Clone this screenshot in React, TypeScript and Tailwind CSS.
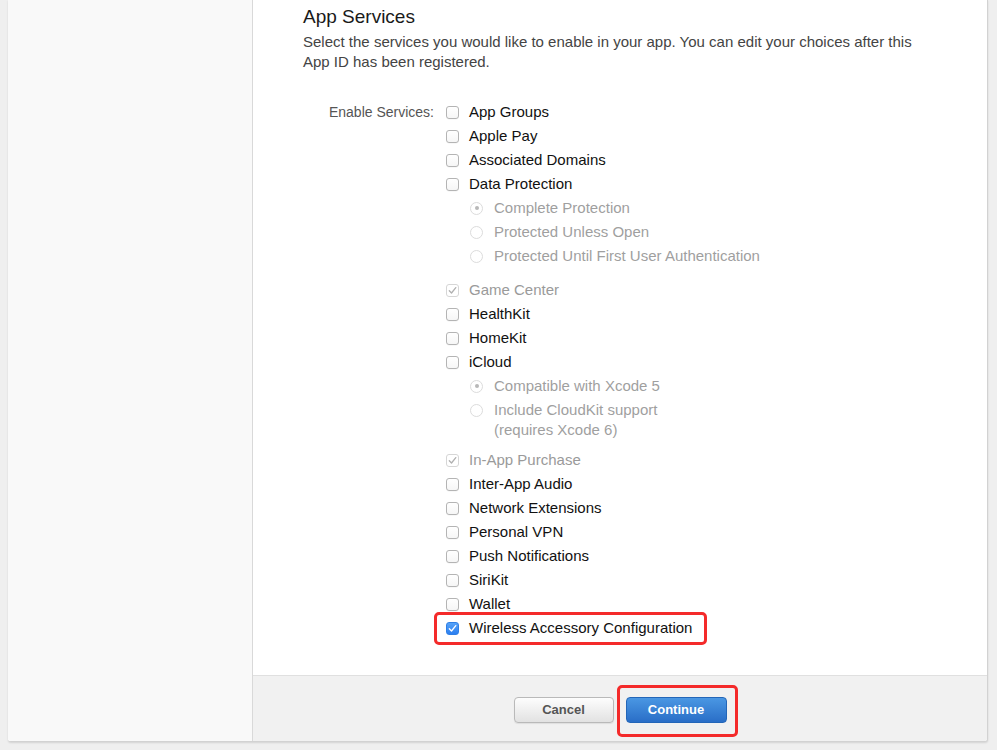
import React from "react";

type Item =
  | { kind: "cb"; label: string; state?: "off" | "disabledChecked" | "checked"; gapBefore?: boolean; highlight?: boolean }
  | { kind: "radio"; label: string; dot?: boolean; extra?: string };

const items: Item[] = [
  { kind: "cb", label: "App Groups" },
  { kind: "cb", label: "Apple Pay" },
  { kind: "cb", label: "Associated Domains" },
  { kind: "cb", label: "Data Protection" },
  { kind: "radio", label: "Complete Protection", dot: true },
  { kind: "radio", label: "Protected Unless Open" },
  { kind: "radio", label: "Protected Until First User Authentication" },
  { kind: "cb", label: "Game Center", state: "disabledChecked", gapBefore: true },
  { kind: "cb", label: "HealthKit" },
  { kind: "cb", label: "HomeKit" },
  { kind: "cb", label: "iCloud" },
  { kind: "radio", label: "Compatible with Xcode 5", dot: true },
  { kind: "radio", label: "Include CloudKit support", extra: "(requires Xcode 6)" },
  { kind: "cb", label: "In-App Purchase", state: "disabledChecked", gapBefore: true },
  { kind: "cb", label: "Inter-App Audio" },
  { kind: "cb", label: "Network Extensions" },
  { kind: "cb", label: "Personal VPN" },
  { kind: "cb", label: "Push Notifications" },
  { kind: "cb", label: "SiriKit" },
  { kind: "cb", label: "Wallet" },
  { kind: "cb", label: "Wireless Accessory Configuration", state: "checked", highlight: true },
];

function Check({ color }: { color: string }) {
  return (
    <svg width="9" height="9" viewBox="0 0 9 9" fill="none">
      <path d="M1.3 4.8 L3.5 7 L7.8 1.6" stroke={color} strokeWidth="1.3" strokeLinecap="round" strokeLinejoin="round" />
    </svg>
  );
}

function Checkbox({ state = "off" }: { state?: "off" | "disabledChecked" | "checked" }) {
  if (state === "checked") {
    return (
      <span className="flex h-[13px] w-[13px] items-center justify-center rounded-[3px] border border-[#2f7fe6] bg-gradient-to-b from-[#56a2f7] to-[#2b7ff0]">
        <Check color="#ffffff" />
      </span>
    );
  }
  if (state === "disabledChecked") {
    return (
      <span className="flex h-[13px] w-[13px] items-center justify-center rounded-[3px] border border-[#d6d6d6] bg-white">
        <Check color="#b0b0b0" />
      </span>
    );
  }
  return <span className="block h-[13px] w-[13px] rounded-[3px] border border-[#b4b4b4] bg-gradient-to-b from-white to-[#f6f6f6] shadow-[0_0.5px_0.5px_rgba(0,0,0,0.06)]" />;
}

function Radio({ dot }: { dot?: boolean }) {
  return (
    <span className="flex h-[13px] w-[13px] items-center justify-center rounded-full border border-[#dcdcdc] bg-white">
      {dot && <span className="block h-[4px] w-[4px] rounded-full bg-[#b8b8b8]" />}
    </span>
  );
}

export default function App() {
  return (
    <div
      className="flex h-[750px] w-[997px] bg-[#efefef]"
      style={{ fontFamily: '"Liberation Sans", Arial, sans-serif' }}
    >
      <div className="ml-[8px] flex h-[742px] w-[980px] overflow-hidden rounded-b-[3px] border-r border-b border-[#d2d2d2] bg-white shadow-[0_1px_2px_rgba(0,0,0,0.12)]">
        <div className="w-[245px] shrink-0 border-r border-[#d9d9d9] bg-[#f9f9f9]" />
        <div className="flex flex-1 flex-col">
          <div className="flex-1 pl-[50px] pt-[5px]">
            <h1 className="text-[19px] leading-[24px] text-[#1a1a1a]">App Services</h1>
            <p className="mt-[3px] w-[625px] text-[15px] leading-[20px] text-[#444]">
              Select the services you would like to enable in your app. You can edit your choices after this App ID has been registered.
            </p>
            <div className="mt-[28px] flex">
              <div className="w-[131px] text-right text-[14px] leading-[24px] text-[#555]">Enable Services:</div>
              <div className="ml-[12px] flex flex-col">
                {items.map((it, i) =>
                  it.kind === "cb" ? (
                    <div key={i} className={`relative flex h-[24px] items-center gap-[10px] ${it.gapBefore ? "mt-[10px]" : ""}`}>
                      {it.highlight && (
                        <span className="pointer-events-none absolute left-[-12px] top-[-4px] h-[33px] w-[273px] rounded-[5px] border-[3px] border-[#f42a2a]" />
                      )}
                      <Checkbox state={it.state} />
                      <span
                        className={`text-[15px] leading-[24px] ${it.state === "disabledChecked" ? "text-[#9a9a9a]" : "text-[#111]"}`}
                      >
                        {it.label}
                      </span>
                    </div>
                  ) : (
                    <div key={i} className="flex items-start gap-[11px] pl-[24px]">
                      <span className="flex h-[24px] items-center">
                        <Radio dot={it.dot} />
                      </span>
                      <span className="text-[15px] leading-[24px] text-[#9f9f9f]">
                        {it.label}
                        {it.extra && <span className="block leading-[16px]">{it.extra}</span>}
                      </span>
                    </div>
                  )
                )}
              </div>
            </div>
          </div>
          <div className="flex h-[66px] shrink-0 items-center justify-center gap-[12px] border-t border-[#e0e0e0] bg-[#f1f1f1] pt-[2px]">
            <button className="h-[26px] w-[100px] rounded-[4px] border border-[#b9b9b9] bg-gradient-to-b from-[#fdfdfd] to-[#e2e2e2] text-[13px] font-bold text-[#555] shadow-[0_1px_1px_rgba(0,0,0,0.08)]">
              Cancel
            </button>
            <div className="relative">
              <span className="pointer-events-none absolute left-[-9px] top-[-12px] h-[52px] w-[121px] rounded-[5px] border-[3px] border-[#f42a2a]" />
              <button className="h-[26px] w-[101px] rounded-[4px] border border-[#2366b8] bg-gradient-to-b from-[#4a97e3] to-[#2a6ec7] text-[13px] font-bold text-white">
                Continue
              </button>
            </div>
          </div>
        </div>
      </div>
    </div>
  );
}
